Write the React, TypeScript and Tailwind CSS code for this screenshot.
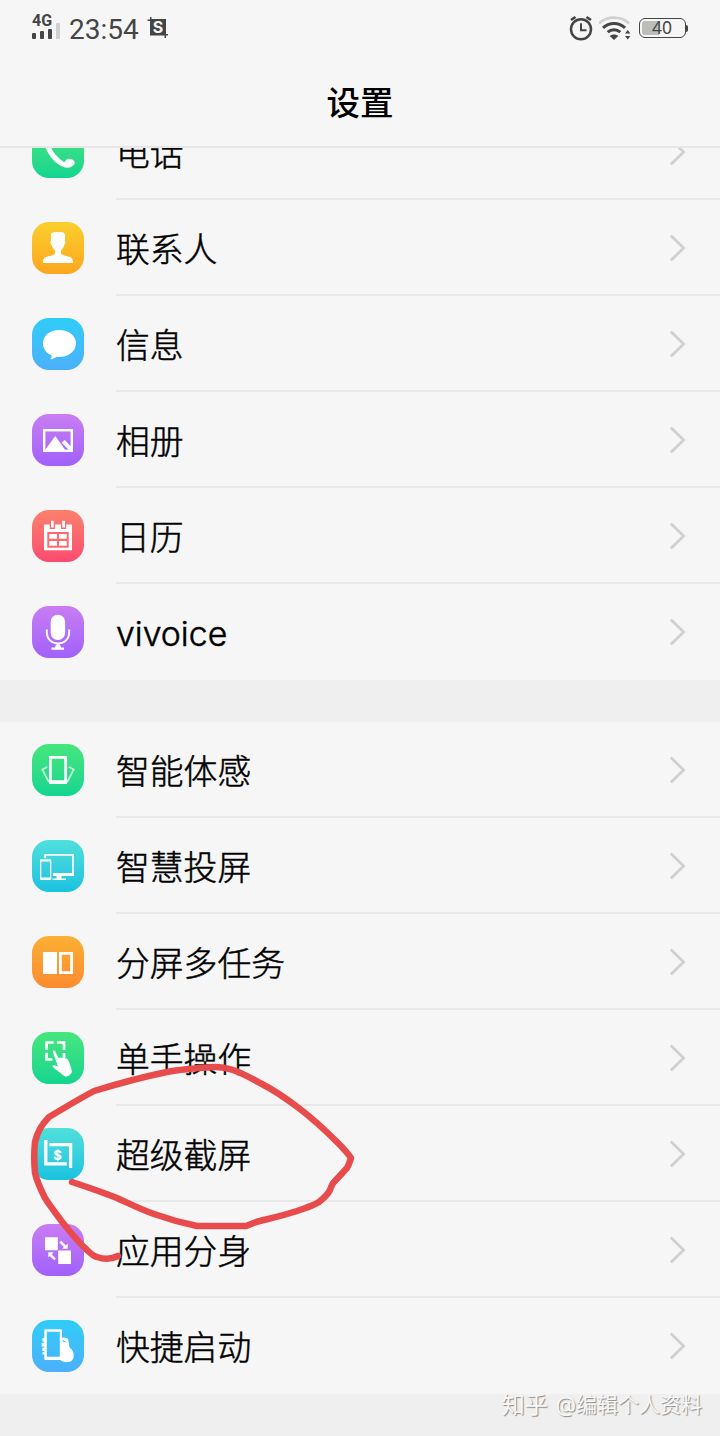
import React from 'react';

type IconName =
  | 'phone'
  | 'contacts'
  | 'message'
  | 'album'
  | 'calendar'
  | 'mic'
  | 'motion'
  | 'cast'
  | 'split'
  | 'onehand'
  | 'capture'
  | 'clone'
  | 'quick';

interface SettingItem {
  label: string;
  icon: IconName;
  color: string;
}

const green = 'from-[#45e67d] to-[#10d590]';
const blue = 'from-[#2ecdf7] to-[#4ab0fb]';
const purple = 'from-[#c97df2] to-[#a160fb]';
const teal = 'from-[#4fe0dc] to-[#18c2e0]';

const appItems: SettingItem[] = [
  { label: '电话', icon: 'phone', color: green },
  { label: '联系人', icon: 'contacts', color: 'from-[#fbcf2d] to-[#fca61f]' },
  { label: '信息', icon: 'message', color: blue },
  { label: '相册', icon: 'album', color: purple },
  { label: '日历', icon: 'calendar', color: 'from-[#fb806c] to-[#fb4a70]' },
  { label: 'vivoice', icon: 'mic', color: purple },
];

const featureItems: SettingItem[] = [
  { label: '智能体感', icon: 'motion', color: green },
  { label: '智慧投屏', icon: 'cast', color: teal },
  { label: '分屏多任务', icon: 'split', color: 'from-[#fbb033] to-[#fc8a30]' },
  { label: '单手操作', icon: 'onehand', color: green },
  { label: '超级截屏', icon: 'capture', color: teal },
  { label: '应用分身', icon: 'clone', color: purple },
  { label: '快捷启动', icon: 'quick', color: blue },
];

const glyphs: Record<IconName, React.ReactNode> = {
  phone: (
    <path
      fill="#fff"
      d="M13 12c3-3 5-1 6 2 1 3-1 4-.5 6.500 2.500 6 8 12 13.500 15.500 1.500.5 1.800-3.200 4.500-3.200 3.500 0 7 2 6 5-1 2-4 4-7 4C25 41 15 29 12.500 18c0-2 0-4 .5-6z"
    />
  ),
  contacts: (
    <path
      fill="#fff"
      d="M19 12.5c0-1.8 3-2.5 7-2.5 5 0 7 .4 7 3.500v5c0 .8.6 1 .4 2-.3 1.500-1 2-1.500 3.500-.7 2-2.200 3.800-3 4.500v3c1.500 2 5.500 2.500 8.600 3.300 2.500.7 3.500 2.500 3.500 6.200H11c0-3.700 1-5.500 3.500-6.200 3.100-.8 7.200-1.300 8.500-3.300v-3c-1.500-1.200-2.300-2.700-3-4.500-.7-1.300-1.300-2-1.500-3.500-.1-1 .5-1.200.5-2z"
    />
  ),
  message: (
    <path
      fill="#fff"
      d="M27.300 12C36.500 12 44 17.500 44 25.200S36.500 39 27.300 39c-1 0-2-.1-3-.2-1.500 1.400-3.300 2.400-6 2.500 1-1.300 1.300-2.300 1.400-3.800C14.500 35.500 11 31 11 25.600 11 17.500 18 12 27.300 12z"
    />
  ),
  album: (
    <g>
      <rect x="12.200" y="16.200" width="27.600" height="20.600" fill="none" stroke="#fff" strokeWidth="2.400" />
      <path fill="#fff" d="M13 36l10.300-14L34 37H13z" />
      <path fill="#fff" d="M29.500 28.500l3.300-2.500 7 7.500V37h-2z" />
    </g>
  ),
  calendar: (
    <g>
      <path fill="#fff" d="M12 14.500h28v25.800H12z" />
      <path fill="#fb6b6d" d="M17.700 14h5.200v5h-5.200zM29 14h5.200v5H29zM15.300 22h21.400v15.700H15.300z" />
      <path fill="#fff" d="M19 10.800h2.700v6.800H19zM30.300 10.800H33v6.800h-2.700zM17.300 24h7.700v4.700h-7.700zM27 24h7.700v4.700H27zM17.300 31h7.700v4.700h-7.700zM27 31h7.700v4.700H27z" />
    </g>
  ),
  mic: (
    <g>
      <rect x="18.700" y="8.700" width="14.400" height="25.300" rx="7.200" fill="#fff" />
      <path d="M14.800 23.500v3c0 6.500 4.800 11 11.200 11s11.200-4.500 11.200-11v-3M26 37v5" fill="none" stroke="#fff" strokeWidth="1.900" />
      <path fill="#fff" d="M24 38.500h4l1 3h3v2.200H19.500v-2.200H23z" />
    </g>
  ),
  motion: (
    <g>
      <path fill="#fff" fillRule="evenodd" d="M17 12h18v28H17zM19.700 14.800v21.500h12.600V14.800z" />
      <path d="M15.300 22.800l-5 2.900 6.500 12.500M36.700 22.800l5 2.900-6.500 12.500" fill="none" stroke="#fff" strokeOpacity=".7" strokeWidth="1.800" />
    </g>
  ),
  cast: (
    <g fill="#fff">
      <path d="M12.300 14H42v22H21v-3h19.200V15.800H14.100V18h-1.800z" />
      <path d="M24.500 36h5v2.500H34V40H20.500v-1.500h4z" />
      <path fillRule="evenodd" d="M9 19.300h9.300q1 0 1 1V39q0 1-1 1H9q-1 0-1-1V20.300q0-1 1-1zM9.300 21.400v16.100H18V21.400z" />
    </g>
  ),
  split: (
    <path fill="#fff" fillRule="evenodd" d="M11 16h14v22H11zM27 16h14v22H27zM29.800 18.700v16.600h8.400V18.700z" />
  ),
  onehand: (
    <g>
      <path
        d="M14.600 17.700v-7.200h7M25 10.500h7v7.200M32 21v6M14.600 20.700v6.800h5.800"
        fill="none"
        stroke="#fff"
        strokeWidth="2.700"
      />
      <path
        fill="#fff"
        d="M21.300 18.800c.8-.7 1.600-.2 2 .7l3.200 6.800c1-1.300 2.700-1 3.300 0 1-1 2.700-.7 3.200.5 1.300-.7 2.600 0 3.200 1.500 1.400 3 3.300 7.500 3.600 11.200.1 2.200-3.700 5.500-6.300 5-2.300-.6-4.700-3.500-7.200-5.200-2.200-1.500-4.500-3-6-5.300 1.600-1.800 4 .2 5.700.6l-5-14c-.3-.7-.2-1.300.3-1.800z"
      />
    </g>
  ),
  capture: (
    <g>
      <path d="M13.800 12v23.800h21M17.300 16.600h21.300V40" fill="none" stroke="#fff" strokeWidth="3.300" />
      <text x="25.600" y="31.500" textAnchor="middle" fill="#fff" fontSize="13" fontWeight="800" fontFamily="Inter, sans-serif">
        $
      </text>
    </g>
  ),
  clone: (
    <g>
      <path fill="#fff" d="M13 13.300h12.800v13H13zM26.200 26.500H39V40H26.200z" />
      <path d="M28.300 17.700l5 5M23 35.300l-4.500-4.500" stroke="#fff" strokeWidth="2.400" />
      <path fill="#fff" d="M35.700 19.500v5.300h-5.700zM16.300 33.500v-5.300h5.500z" />
    </g>
  ),
  quick: (
    <g fill="#fff">
      <path fillRule="evenodd" d="M13.300 9.300H29q1 0 1 1V39q0 1-1 1H13.300q-1 0-1-1V10.300q0-1 1-1zM14.800 11.700v25h13v-25z" />
      <path d="M30 18c3-1 6 0 6.500 2 .4 3 0 5.500 1.500 8 2.500 2 4 4.500 3.700 7.800-.2 4-2.500 6-5.500 6.300-3.300.3-6-.3-8.500-2.600L30 38z" />
      <path d="M10.500 18h3v3.500h-3zM9.700 22.700h3.500v3.800H9.700zM10.300 27.700h3V31h-3zM10.500 32h2.500v2.500h-2.500z" />
      <path d="M30.500 20.500l3 1.500" stroke="#3abefa" strokeWidth="1.200" />
    </g>
  ),
};

const StatusBar: React.FC = () => (
  <div className="flex h-14 items-center justify-between pl-8 pr-8 text-[#454545]">
    <div className="flex items-center">
      <div className="mb-1 flex w-[37px] flex-col">
        <span className="h-[13px] font-[Roboto,sans-serif] text-[16px] leading-[16px] font-bold">4G</span>
        <div className="-mt-[3px] flex h-4 items-end gap-1">
          <span className="h-1.5 w-1 rounded-[1px] bg-[#454545]" />
          <span className="h-2 w-1 rounded-[1px] bg-[#454545]" />
          <span className="h-[10px] w-1 rounded-[1px] bg-[#454545]" />
          <span className="h-4 w-1 rounded-[1px] bg-[#d0d0d0]" />
        </div>
      </div>
      <span className="mt-1 w-[78px] font-[Roboto,sans-serif] text-[28px] leading-8">23:54</span>
      <svg width="22" height="22" viewBox="0 0 22 22">
        <path fill="#454545" d="M3 0h1.500v2H19v15h2v1.500h-2V21h-1.500v-2.500H3V4H0.500V2.500H3z" />
        <text x="11" y="15.800" textAnchor="middle" fill="#f6f6f6" fontSize="16" fontWeight="700" fontFamily="Inter, sans-serif">
          S
        </text>
      </svg>
    </div>

    <div className="flex items-center">
      <svg width="26" height="26" viewBox="0 0 26 26" fill="none" stroke="#454545">
        <circle cx="12" cy="14.300" r="10" strokeWidth="2.500" />
        <path d="M12 8.300v7h5.500" strokeWidth="2" />
        <path d="M2 5l4.500-3M22 5l-4.500-3" strokeWidth="2.600" />
      </svg>
      <svg className="ml-1" width="34" height="26" viewBox="0 0 34 26" fill="none">
        <path d="M0 8.500c8-7.800 22-7.800 30 0" stroke="#d0d0d0" strokeWidth="2.800" />
        <path d="M4 12.800c6-5.800 16-5.800 22 0" stroke="#454545" strokeWidth="3" />
        <path d="M8.700 17.200c3.600-3.200 9-3.200 12.600 0" stroke="#454545" strokeWidth="3" />
        <path d="M10.700 21c2.300-2 6.300-2 8.600 0L15 25z" fill="#454545" />
        <path d="M26 18.500l2.700-3.500 2.700 3.500zM26 21h5.400l-2.700 3.500z" fill="#454545" />
      </svg>
      <div className="ml-[6px] flex h-5 w-[47px] items-center rounded-md border border-[#454545] p-0.5">
        <div className="flex h-[14px] w-[17px] items-center rounded-l-[3px] bg-[#bcbcb9] pl-[10px]">
          <span className="-mt-px font-['Noto_Sans',sans-serif] text-[17.500px] leading-none">40</span>
        </div>
      </div>
      <span className="h-[7px] w-0.5 rounded-r-sm bg-[#454545]" />
    </div>
  </div>
);

const SettingRow: React.FC<{ item: SettingItem; last: boolean }> = ({ item, last }) => (
  <div className="flex h-24 pl-8">
    <div className={`mt-[22px] h-[52px] w-[52px] shrink-0 rounded-[17px] bg-linear-to-b ${item.color}`}>
      <svg width="52" height="52" viewBox="0 0 52 52">
        {glyphs[item.icon]}
      </svg>
    </div>
    <div
      className={`ml-8 flex flex-1 items-center justify-between border-b-2 pr-8 ${
        last ? 'border-transparent' : 'border-[#e8e8e8]'
      }`}
    >
      <span className="pt-1.5 text-[33.8px] leading-none font-light text-black [-webkit-text-stroke:0.5px_black]">
        {item.label}
      </span>
      <svg className="mt-0.5" width="20" height="30" viewBox="0 0 20 30" fill="none">
        <path d="M2.800 2.500L15.600 15 2.800 27.500" stroke="#d0d0d0" strokeWidth="2.800" />
      </svg>
    </div>
  </div>
);

// Freehand marker line circling one of the entries
const MarkerStroke: React.FC = () => (
  <svg className="pointer-events-none absolute top-0 left-0" width="720" height="1436" viewBox="0 0 720 1436">
    <path
      d="M72 1182C87 1187 102 1192 117 1198C130 1204 142 1210 154 1214C168 1219 182 1223 197 1226H246C251 1224 255 1222 260 1221C272 1218 285 1215 297 1211C305 1208 313 1206 319 1202C324 1198 328 1194 330 1190C331 1187 332 1184 334 1182L347 1168C349 1165 350 1161 351 1158C347 1152 342 1147 337 1142C325 1130 313 1119 300 1109C287 1099 274 1090 260 1083C251 1078 242 1073 233 1070C227 1068 222 1067 216 1067C200 1068 183 1069 167 1072C142 1077 117 1084 94 1091C79 1099 64 1108 49 1117C42 1124 37 1133 35 1142C34 1152 34 1163 35 1173C37 1182 41 1190 45 1198C50 1206 57 1215 63 1223C71 1233 78 1242 87 1250C90 1253 93 1256 97 1257C103 1259 110 1260 118 1256"
      fill="none"
      stroke="#e84b4b"
      strokeWidth="6.500"
      strokeLinecap="round"
      strokeLinejoin="round"
    />
  </svg>
);

export default function App() {
  return (
    <div className="relative flex h-[1436px] w-[720px] flex-col overflow-hidden bg-[#f6f6f6] font-[Inter,'Noto_Sans_CJK_SC',sans-serif]">
      <StatusBar />
      <header className="flex h-[92px] shrink-0 items-center justify-center border-b-2 border-[#e6e6e6]">
        <h1 className="pt-[5px] text-[33.5px] leading-none font-medium text-black">设置</h1>
      </header>

      <main className="flex-1 overflow-hidden bg-[#efefef]">
        {/* List is scrolled, so the first row is partly under the header */}
        <section className="-mt-11 bg-[#f6f6f6]">
          {appItems.map((item, i) => (
            <SettingRow key={item.label} item={item} last={i === appItems.length - 1} />
          ))}
        </section>
        <section className="mt-[42px] bg-[#f6f6f6]">
          {featureItems.map((item, i) => (
            <SettingRow key={item.label} item={item} last={i === featureItems.length - 1} />
          ))}
        </section>
      </main>

      <MarkerStroke />
      <div className="absolute right-[18px] bottom-[19px] flex items-center gap-2 leading-6 text-[#f8f8f8] [text-shadow:1px_1px_1px_#888]">
        <span className="text-[23px]">知乎</span>
        <span className="text-[21px]">@编辑个人资料</span>
      </div>
    </div>
  );
}
